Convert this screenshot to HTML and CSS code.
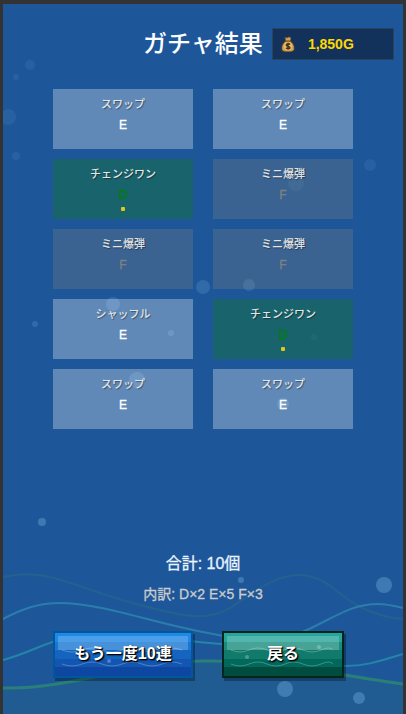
FILE: index.html
```
<!DOCTYPE html>
<html lang="ja">
<head>
  <meta charset="UTF-8">
  <meta name="viewport" content="width=device-width, initial-scale=1">
  <title>ガチャ結果</title>
  <link rel="stylesheet" href="styles.css">
</head>
<body>

  <main class="game">
    <!-- sea background -->
    <svg class="sea" viewBox="3 4 400 710" preserveAspectRatio="xMidYMax slice" aria-hidden="true">
      <path fill="#205c92" d="M3 688C70 690 130 662 203 661S330 674 403 684V714H3Z"/>
      <g fill="none">
        <path stroke="#22628f" stroke-width="2" d="M3 577C50 566 75 590 152 608C190 618 210 620 230 608C254 593 274 575 299 575C329 575 341 601 367 610C380 615 388 618 403 619"/>
        <path stroke="#2a7eae" stroke-width="2" d="M3 619C22 609 38 603 60 603C100 603 150 622 203 632C250 642 280 643 307 630C337 616 352 604 378 604C388 604 395 606 403 608"/>
        <path stroke="#2385a8" stroke-width="2" d="M3 660C30 653 45 642 70 637C120 628 165 640 222 644C275 650 300 666 345 666C370 666 385 659 403 654"/>
        <path stroke="#288078" stroke-width="3" d="M3 688C70 690 130 662 203 661S330 674 403 684"/>
      </g>
      <g fill="#7ab8e8">
        <g opacity=".1">
          <circle cx="30" cy="65" r="5"/>
          <circle cx="16" cy="77" r="3"/>
          <circle cx="8" cy="117" r="8"/>
          <circle cx="16" cy="156" r="4"/>
          <circle cx="370" cy="165" r="6"/>
          <circle cx="296" cy="183" r="8"/>
        </g>
        <g opacity=".2">
          <circle cx="249" cy="285" r="6"/>
          <circle cx="203" cy="287" r="7"/>
          <circle cx="113" cy="304" r="7"/>
          <circle cx="35" cy="324" r="3"/>
          <circle cx="171" cy="333" r="3"/>
          <circle cx="314" cy="337" r="3"/>
          <circle cx="137" cy="380" r="8"/>
          <circle cx="283" cy="404" r="6"/>
        </g>
        <g opacity=".35">
          <circle cx="42" cy="522" r="4"/>
          <circle cx="241" cy="580" r="3"/>
          <circle cx="384" cy="585" r="8"/>
          <circle cx="285" cy="689" r="8"/>
          <circle cx="359" cy="698" r="6"/>
        </g>
      </g>
    </svg>

    <header class="header">
      <h1>ガチャ結果</h1>
      <div class="wallet">
        <svg class="bag" viewBox="0 0 14 16" aria-hidden="true">
          <path fill="#d9a24a" stroke="#8a5a22" stroke-width=".7" d="M4 1.5 6 2l2-1 2 1-1 3C12 7 13.4 10 13 13c-.2 2-2 2.500-6 2.500S1.200 15 1 13C.6 10 2 7 5 5Z"/>
          <path fill="#7a4d20" d="M4.500 4.500h5v1.200h-5z"/>
          <circle cx="7" cy="10.200" r="4" fill="#e8c070"/>
          <path fill="none" stroke="#3f3020" stroke-width="1.400" d="M9 8.600C8.500 7.500 5.200 7.500 5.200 9S9 10.300 9 11.700 5.500 13 5 11.800M7 6.800v7"/>
        </svg>
        <span>1,850G</span>
      </div>
    </header>

    <ul class="results">
      <li class="card rank-e"><span class="name">スワップ</span><span class="rank">E</span></li>
      <li class="card rank-e"><span class="name">スワップ</span><span class="rank">E</span></li>
      <li class="card rank-d"><span class="name">チェンジワン</span><span class="rank">D</span><i class="star"></i></li>
      <li class="card rank-f"><span class="name">ミニ爆弾</span><span class="rank">F</span></li>
      <li class="card rank-f"><span class="name">ミニ爆弾</span><span class="rank">F</span></li>
      <li class="card rank-f"><span class="name">ミニ爆弾</span><span class="rank">F</span></li>
      <li class="card rank-e"><span class="name">シャッフル</span><span class="rank">E</span></li>
      <li class="card rank-d"><span class="name">チェンジワン</span><span class="rank">D</span><i class="star"></i></li>
      <li class="card rank-e"><span class="name">スワップ</span><span class="rank">E</span></li>
      <li class="card rank-e"><span class="name">スワップ</span><span class="rank">E</span></li>
    </ul>

    <section class="summary">
      <p class="total">合計: 10個</p>
      <p class="detail">内訳: D×2 E×5 F×3</p>
    </section>

    <div class="actions">
      <button type="button" class="btn btn-again">
        <svg class="ripples" viewBox="0 0 136 43" preserveAspectRatio="none" aria-hidden="true">
          <path d="M7 17q10 4 20 0t20 0 20 0 20 0 20 0 20 0M7 31q10 4 20 0t20 0 20 0 20 0 20 0 20 0"/>
          <circle cx="54" cy="28" r="2"/>
        </svg>
        <span>もう一度10連</span>
      </button>
      <button type="button" class="btn btn-back">
        <svg class="ripples" viewBox="0 0 118 43" preserveAspectRatio="none" aria-hidden="true">
          <path d="M7 17q9 4 18 0t18 0 18 0 18 0 18 0 12 0M7 31q9 4 18 0t18 0 18 0 18 0 18 0 12 0"/>
          <circle cx="23" cy="24" r="2"/>
          <circle cx="95" cy="14" r="2"/>
        </svg>
        <span>戻る</span>
      </button>
    </div>
  </main>

</body>
</html>
```
FILE: styles.css
```
* {
  box-sizing: border-box;
}

body {
  margin: 0;
  padding: 4px 3px 0;
  background-color: #333;
  font-family: "Liberation Sans", "Noto Sans CJK JP", sans-serif;
  color: #fff;
}

h1, p, ul {
  margin: 0;
  padding: 0;
}

.game {
  position: relative;
  display: flex;
  flex-direction: column;
  min-height: calc(100vh - 4px);
  padding-bottom: 36px;
  background-color: #1e5799;
  overflow: hidden;
}

.sea {
  position: absolute;
  inset: 0;
  width: 100%;
  height: 100%;
}

.header, .results, .summary, .actions {
  position: relative;
}

.header {
  display: grid;
  grid-template-columns: 1fr auto 1fr;
  align-items: center;
  padding-top: 24px;
}

h1 {
  grid-column: 2;
  font-size: 24px;
  font-weight: 500;
  line-height: 32px;
}

.wallet {
  display: flex;
  align-items: center;
  gap: 13px;
  height: 32px;
  margin: 0 9px;
  padding-left: 8px;
  background-color: #12325c;
  border: 1px solid #2c4459;
  border-radius: 1px;
  color: #ffd700;
  font-size: 14px;
  font-weight: bold;
}

.bag {
  width: 14px;
  height: 16px;
}

.results {
  display: grid;
  grid-template-columns: 1fr 1fr;
  gap: 10px 20px;
  padding: 29px 50px 0;
  list-style: none;
}

.card {
  display: flex;
  flex-direction: column;
  align-items: center;
  height: 60px;
  padding-top: 8px;
  line-height: 14px;
}

.name {
  margin-bottom: 7px;
  color: #e4e4e4;
  font-size: 11px;
  font-weight: 500;
  text-shadow: 1px 1px 1px rgba(0, 0, 0, 0.4);
}

.rank {
  font-size: 12px;
  -webkit-text-stroke: 0.3px;
}

.star {
  width: 4px;
  height: 4px;
  margin-top: 5px;
  border-radius: 1px;
  background-color: #e0c818;
}

.rank-e {
  background-color: rgba(255, 255, 255, 0.3);
}

.rank-d {
  background-color: rgba(20, 107, 78, 0.6);
}

.rank-d .rank {
  color: #008000;
}

.rank-f {
  background-color: rgba(128, 128, 128, 0.3);
}

.rank-f .rank {
  color: #808080;
}

.summary {
  margin-top: auto;
  padding-bottom: 27px;
  text-align: center;
}

.total {
  margin-bottom: 9px;
  color: #e8f4ff;
  font-size: 16px;
  line-height: 22px;
  -webkit-text-stroke: 0.3px #e8f4ff;
}

.detail {
  color: #ccc;
  font-size: 14px;
  line-height: 20px;
  -webkit-text-stroke: 0.3px #ccc;
}

.actions {
  display: grid;
  grid-template-columns: 1fr 1fr;
  gap: 20px;
  justify-items: center;
  padding: 0 50px;
}

.btn {
  position: relative;
  height: 47px;
  padding: 0 0 5px;
  border: 2px solid;
  box-shadow: 2px 3px 0 rgba(0, 0, 0, 0.3);
  color: #fff;
  font-family: inherit;
  font-size: 16px;
  font-weight: bold;
  cursor: pointer;
}

/* glossy strip along the top */
.btn::before {
  content: "";
  position: absolute;
  inset: 3px 3px auto;
  height: 14px;
  background-color: rgba(255, 255, 255, 0.2);
}

.btn span {
  position: relative;
  text-shadow: 1px 1px 1px #000, 1px 1px 2px #000;
}

.btn-again {
  width: 100%;
  border-color: #01579b;
  background: linear-gradient(#1e88e5 20%, #1976d2 20% 40%, #1565c0 40% 60%, #1256b1 60% 80%, #0d47a1 80%);
}

.btn-back {
  width: 122px;
  border-color: #00251f;
  background: linear-gradient(#26a69a 20%, #1a8c7c 20% 40%, #127a6b 40% 60%, #00695c 60% 80%, #004d40 80%);
}

.ripples {
  position: absolute;
  inset: 0;
  width: 100%;
  height: 100%;
  fill: rgba(255, 255, 255, 0.25);
}

.ripples path {
  fill: none;
  stroke: rgba(255, 255, 255, 0.25);
}
```
